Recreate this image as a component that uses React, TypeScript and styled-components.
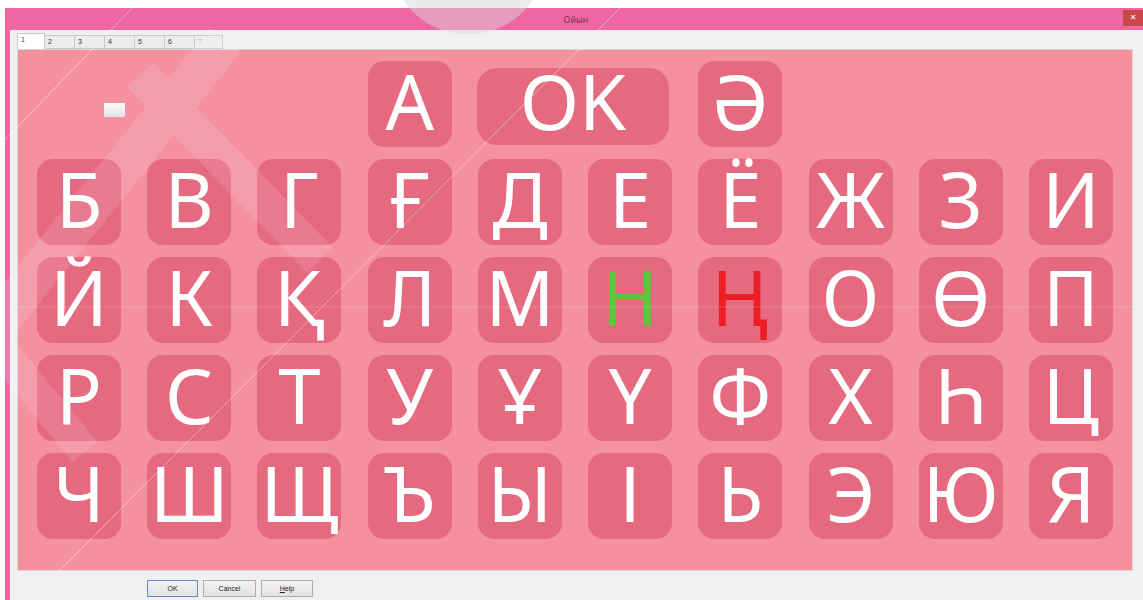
import React from "react";
import styled, { createGlobalStyle } from "styled-components";

const GlobalStyle = createGlobalStyle`
  html, body {
    margin: 0;
    padding: 0;
    background: #ffffff;
    overflow: hidden;
  }
  body {
    font-family: "Noto Sans", "DejaVu Sans", sans-serif;
  }
`;

const Screen = styled.div`
  position: relative;
  width: 1143px;
  height: 600px;
  overflow: hidden;
  padding: 8px 0 0 5px;
  box-sizing: border-box;
  background: #ffffff;
`;

const Window = styled.div`
  display: flex;
  flex-direction: column;
  width: 1138px;
  height: 600px;
  background: #ee66a2;
`;

const TitleBar = styled.div`
  display: grid;
  grid-template-columns: 1fr auto 1fr;
  align-items: start;
  height: 22px;
  flex: none;
`;

const Title = styled.div`
  grid-column: 2;
  margin-top: 6px;
  margin-left: 4px;
  font-family: "Noto Sans", sans-serif;
  font-size: 9px;
  line-height: 11px;
  color: #5a2b3e;
  opacity: 0.85;
`;

const CloseButton = styled.div`
  grid-column: 3;
  justify-self: end;
  margin-top: 2px;
  width: 20px;
  height: 16px;
  background: #c9474a;
  color: #ffffff;
  font-family: "DejaVu Sans", sans-serif;
  font-size: 8px;
  line-height: 16px;
  text-align: center;
`;

const Client = styled.div`
  display: flex;
  flex-direction: column;
  flex: 1;
  margin: 0 0 0 5px;
  background: #f0f0f0;
  padding: 0 5px 0 6px;
  border-left: 1px solid #fafafa;
`;

const TabStrip = styled.div`
  display: flex;
  align-items: flex-end;
  height: 19px;
  flex: none;
`;

const Tab = styled.div<{ $active?: boolean; $disabled?: boolean; $w: number }>`
  width: ${(p) => p.$w}px;
  height: ${(p) => (p.$active ? 16 : 14)}px;
  box-sizing: border-box;
  border: 1px solid #c9c9c9;
  border-bottom: ${(p) => (p.$active ? "none" : "1px solid #c9c9c9")};
  margin-right: -1px;
  background: ${(p) => (p.$active ? "#ffffff" : "#ececec")};
  font-family: "Liberation Sans", sans-serif;
  font-size: 7px;
  line-height: 12px;
  padding-left: 3px;
  color: ${(p) => (p.$disabled ? "#b0b0b0" : "#333333")};
`;

const Panel = styled.div`
  display: grid;
  grid-template-columns: repeat(10, 84px);
  grid-template-rows: repeat(5, 86px);
  justify-content: space-between;
  row-gap: 12px;
  width: 1116px;
  height: 522px;
  box-sizing: border-box;
  padding: 11px 19px 0 19px;
  border: 1px solid #e3d3d7;
  background: #f5909f;
  flex: none;
`;

const Key = styled.div<{ $color?: string; $col: number; $row: number }>`
  grid-column: ${(p) => p.$col};
  grid-row: ${(p) => p.$row};
  display: flex;
  align-items: center;
  justify-content: center;
  box-sizing: border-box;
  padding-bottom: 6px;
  border-radius: 16px;
  background: #e5697f;
  color: ${(p) => p.$color ?? "#ffffff"};
  font-family: "Noto Sans", "DejaVu Sans", sans-serif;
  font-size: 76px;
  line-height: 1;
`;

const WideKey = styled(Key)`
  grid-column: 5 / 7;
  justify-self: start;
  align-self: start;
  width: 192px;
  height: 77px;
  margin: 7px 0 0 -1px;
  border-radius: 20px;
  padding-bottom: 12px;
`;

const Marker = styled.div`
  grid-column: 1 / 3;
  grid-row: 1;
  justify-self: start;
  align-self: start;
  width: 21px;
  height: 14px;
  margin: 42px 0 0 67px;
  background: linear-gradient(180deg, #fafafa 0%, #e3e3e3 100%);
`;

/* faint watermark printed across the whole capture */
const Watermark = styled.svg`
  position: absolute;
  left: 0;
  top: 0;
  width: 1143px;
  height: 600px;
  pointer-events: none;
`;

const Footer = styled.div`
  display: flex;
  gap: 5px;
  padding: 9px 0 0 130px;
`;

const DialogButton = styled.div<{ $w: number; $default?: boolean }>`
  width: ${(p) => p.$w}px;
  height: 17px;
  box-sizing: border-box;
  border: 1px solid ${(p) => (p.$default ? "#5b8fc7" : "#adadad")};
  background: linear-gradient(180deg, #f2f2f2 0%, #e2e2e2 100%);
  font-family: "Liberation Sans", sans-serif;
  font-size: 7px;
  line-height: 15px;
  text-align: center;
  color: #222222;
`;

const tabs = [
  { label: "1", w: 28 },
  { label: "2", w: 31 },
  { label: "3", w: 31 },
  { label: "4", w: 31 },
  { label: "5", w: 31 },
  { label: "6", w: 31 },
  { label: "7", w: 29 },
];

type Letter = { ch: string; color?: string };

const rows: Letter[][] = [
  "БВГҒДЕЁЖЗИ".split("").map((ch) => ({ ch })),
  [
    { ch: "Й" },
    { ch: "К" },
    { ch: "Қ" },
    { ch: "Л" },
    { ch: "М" },
    { ch: "Н", color: "#5cc63c" },
    { ch: "Ң", color: "#ee1c25" },
    { ch: "О" },
    { ch: "Ө" },
    { ch: "П" },
  ],
  "РСТУҰҮФХҺЦ".split("").map((ch) => ({ ch })),
  "ЧШЩЪЫІЬЭЮЯ".split("").map((ch) => ({ ch })),
];

export default function App() {
  return (
    <>
      <GlobalStyle />
      <Screen>
        <Window>
          <TitleBar>
            <Title>Ойын</Title>
            <CloseButton>✕</CloseButton>
          </TitleBar>
          <Client>
            <TabStrip>
              {tabs.map((t, i) => (
                <Tab key={t.label} $w={t.w} $active={i === 0} $disabled={i === 6}>
                  {t.label}
                </Tab>
              ))}
            </TabStrip>
            <Panel>
              <Marker />
              <Key $col={4} $row={1}>
                А
              </Key>
              <WideKey $col={5} $row={1}>
                OK
              </WideKey>
              <Key $col={7} $row={1}>
                Ә
              </Key>
              {rows.map((row, r) =>
                row.map((l, c) => (
                  <Key key={`${r}-${c}`} $row={r + 2} $col={c + 1} $color={l.color}>
                    {l.ch}
                  </Key>
                ))
              )}
            </Panel>
            <Footer>
              <DialogButton $w={51} $default>
                OK
              </DialogButton>
              <DialogButton $w={53}>Cancel</DialogButton>
              <DialogButton $w={52}>
                <u>H</u>elp
              </DialogButton>
            </Footer>
          </Client>
        </Window>
        <Watermark viewBox="0 0 1143 600">
          <ellipse cx="468" cy="-28" rx="72" ry="62" fill="#d9d4d6" opacity="0.5" />
          <g stroke="#ffffff" strokeLinecap="butt" fill="none" opacity="0.12">
            <line x1="225" y1="40" x2="-40" y2="370" strokeWidth="40" />
            <line x1="140" y1="75" x2="320" y2="260" strokeWidth="36" />
            <line x1="-40" y1="300" x2="85" y2="452" strokeWidth="32" />
          </g>
          <g stroke="#ffffff" strokeWidth="1" opacity="0.45">
            <line x1="140" y1="0" x2="-5" y2="150" />
            <line x1="628" y1="0" x2="50" y2="580" />
          </g>
          <line x1="0" y1="307" x2="1143" y2="307" stroke="#ffffff" strokeWidth="1" opacity="0.18" />
        </Watermark>
      </Screen>
    </>
  );
}
